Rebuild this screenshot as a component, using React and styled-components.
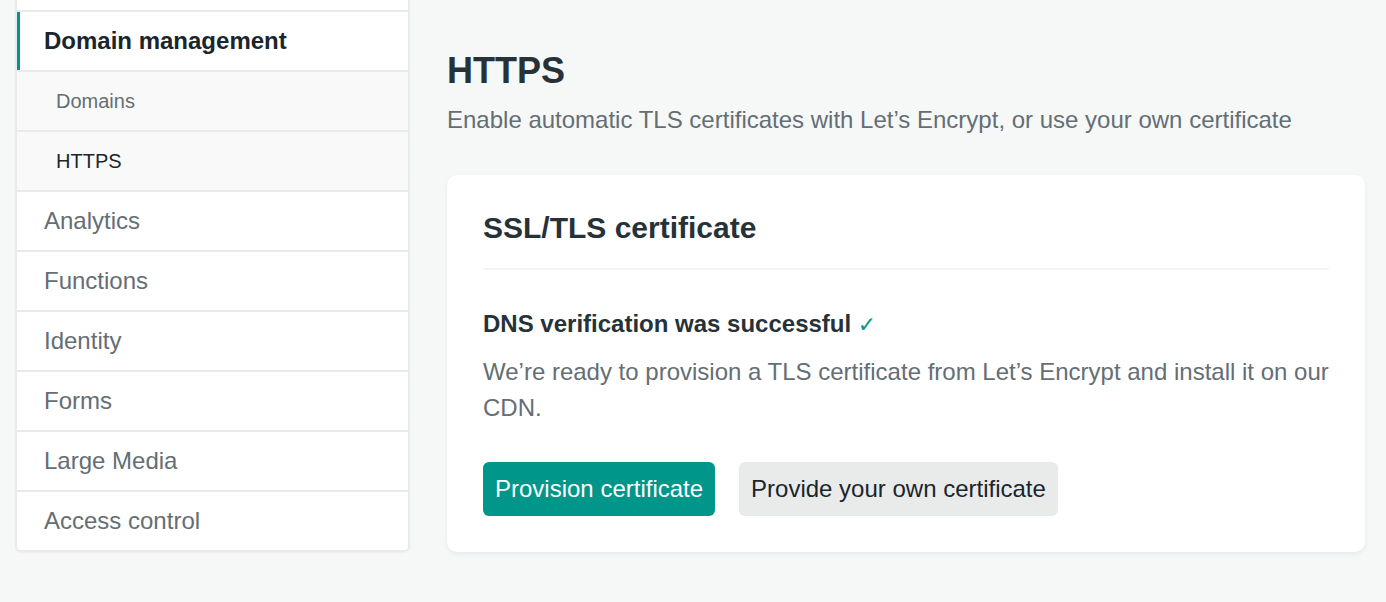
import React from "react";
import styled, { createGlobalStyle } from "styled-components";

const GlobalStyle = createGlobalStyle`
  html, body {
    margin: 0;
    padding: 0;
    background: #f6f8f8;
    font-family: "Liberation Sans", Arial, sans-serif;
  }
  * {
    box-sizing: border-box;
  }
`;

const Page = styled.div`
  display: flex;
  align-items: flex-start;
  gap: 37px;
  padding: 0 21px 0 15px;
  height: 602px;
  overflow: hidden;
`;

const Sidebar = styled.nav`
  flex: 0 0 395px;
  margin-top: -50px;
  background: #ffffff;
  border: 2px solid #e9ebeb;
  border-radius: 6px;
  overflow: hidden;
  box-shadow: 0 1px 2px rgba(0, 0, 0, 0.04);
`;

const NavItem = styled.div`
  height: 60px;
  display: flex;
  align-items: center;
  padding-left: ${(p) => (p.sub ? "39px" : "27px")};
  border-top: ${(p) => (p.first ? "none" : "2px solid #e9ebeb")};
  background: ${(p) => (p.sub ? "#f9f9f9" : "#ffffff")};
  color: ${(p) => (p.active || p.current ? "#1b252c" : "#646e74")};
  font-size: ${(p) => (p.sub ? "20px" : "24px")};
  font-weight: ${(p) => (p.active ? 700 : 400)};
  box-shadow: ${(p) => (p.active ? "inset 3px 0 0 #00968a" : "none")};
  &:first-child {
    height: 58px;
  }
`;

const Main = styled.main`
  flex: 1;
  padding-top: 49px;
`;

const Title = styled.h1`
  margin: 0;
  font-size: 36px;
  line-height: 43px;
  font-weight: 700;
  color: #263238;
`;

const Subtitle = styled.p`
  margin: 10px 0 0;
  font-size: 24px;
  line-height: 36px;
  color: #646e74;
`;

const Card = styled.section`
  margin-top: 37px;
  background: #ffffff;
  border-radius: 10px;
  padding: 35px 36px 36px;
  box-shadow: 0 2px 4px rgba(40, 60, 70, 0.08);
`;

const CardTitle = styled.h2`
  margin: 0;
  padding-bottom: 22px;
  font-size: 30px;
  line-height: 36px;
  font-weight: 700;
  color: #263238;
  border-bottom: 2px solid #f2f3f3;
`;

const Status = styled.h3`
  margin: 36px 0 0;
  font-size: 24px;
  line-height: 36px;
  font-weight: 700;
  color: #263238;
`;

const Check = styled.span`
  color: #00968a;
  font-family: "DejaVu Sans", sans-serif;
  font-weight: 700;
  font-size: 22px;
`;

const Text = styled.p`
  margin: 11px 0 0;
  font-size: 24px;
  line-height: 36px;
  color: #646e74;
`;

const Actions = styled.div`
  display: flex;
  gap: 24px;
  margin-top: 36px;
`;

const Button = styled.button`
  height: 54px;
  padding: 0 12px;
  border: none;
  border-radius: 6px;
  font-family: "Liberation Sans", Arial, sans-serif;
  font-size: 24px;
  line-height: 30px;
  cursor: pointer;
  background: ${(p) => (p.primary ? "#00968a" : "#e9ebeb")};
  color: ${(p) => (p.primary ? "#ffffff" : "#1b252c")};
`;

const navItems = [
  { label: "General", first: true },
  { label: "Domain management", active: true },
  { label: "Domains", sub: true },
  { label: "HTTPS", sub: true, current: true },
  { label: "Analytics" },
  { label: "Functions" },
  { label: "Identity" },
  { label: "Forms" },
  { label: "Large Media" },
  { label: "Access control" },
];

const App = () => {
  return (
    <>
      <GlobalStyle />
      <Page>
        <Sidebar>
          {navItems.map((item) => (
            <NavItem
              key={item.label}
              first={item.first}
              active={item.active}
              sub={item.sub}
              current={item.current}
            >
              {item.label}
            </NavItem>
          ))}
        </Sidebar>
        <Main>
          <Title>HTTPS</Title>
          <Subtitle>
            Enable automatic TLS certificates with Let’s Encrypt, or use your own certificate
          </Subtitle>
          <Card>
            <CardTitle>SSL/TLS certificate</CardTitle>
            <Status>
              DNS verification was successful <Check>✓</Check>
            </Status>
            <Text>
              We’re ready to provision a TLS certificate from Let’s Encrypt and install it on our
              CDN.
            </Text>
            <Actions>
              <Button primary>Provision certificate</Button>
              <Button>Provide your own certificate</Button>
            </Actions>
          </Card>
        </Main>
      </Page>
    </>
  );
};

export default App;
